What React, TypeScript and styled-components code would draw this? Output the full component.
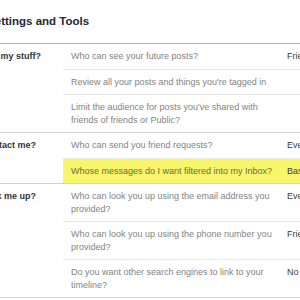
import React from 'react';
import styled, { createGlobalStyle } from 'styled-components';

const GlobalStyle = createGlobalStyle`
  html, body {
    margin: 0;
    padding: 0;
    background: #ffffff;
    overflow: hidden;
  }
  body {
    font-family: "Liberation Sans", Arial, sans-serif;
  }
`;

const Page = styled.div`
  width: 420px;
  margin-left: -57px;
`;

const Title = styled.h2`
  margin: 15px 0 0;
  padding-bottom: 15px;
  font-size: 11.5px;
  line-height: 13px;
  font-weight: bold;
  color: #232937;
  border-bottom: 1px solid #b4b4b4;
`;

const Section = styled.div`
  display: grid;
  grid-template-columns: 120px 1fr;
  border-bottom: 1px solid #d2d2d2;
`;

const Label = styled.div`
  padding-top: 6px;
  font-size: 9px;
  line-height: 12.5px;
  font-weight: bold;
  color: #333333;
`;

const Rows = styled.div`
  display: flex;
  flex-direction: column;
`;

const Row = styled.div<{ $highlight?: boolean }>`
  display: flex;
  align-items: flex-start;
  padding: 6px 0 6px 8px;
  font-size: 9px;
  line-height: 12.5px;
  background: ${(p) => (p.$highlight ? '#f8f66a' : 'transparent')};

  & + & {
    border-top: 1px solid #e8e8e8;
  }
`;

const Question = styled.div<{ $highlight?: boolean }>`
  width: 208px;
  margin-right: 8px;
  color: ${(p) => (p.$highlight ? '#6e6c3a' : '#838383')};
`;

const Value = styled.div`
  color: #3d3d3d;
  white-space: nowrap;
`;

interface Item {
  q: string;
  v?: string;
  highlight?: boolean;
}

interface Group {
  label: string;
  items: Item[];
}

const groups: Group[] = [
  {
    label: 'Who can see my stuff?',
    items: [
      { q: 'Who can see your future posts?', v: 'Friends' },
      { q: "Review all your posts and things you're tagged in" },
      { q: "Limit the audience for posts you've shared with friends of friends or Public?" },
    ],
  },
  {
    label: 'Who can contact me?',
    items: [
      { q: 'Who can send you friend requests?', v: 'Everyone' },
      { q: 'Whose messages do I want filtered into my Inbox?', v: 'Basic Filtering', highlight: true },
    ],
  },
  {
    label: 'Who can look me up?',
    items: [
      { q: 'Who can look you up using the email address you provided?', v: 'Everyone' },
      { q: 'Who can look you up using the phone number you provided?', v: 'Friends' },
      { q: 'Do you want other search engines to link to your timeline?', v: 'No' },
    ],
  },
];

const App: React.FC = () => {
  return (
    <Page>
      <GlobalStyle />
      <Title>Privacy Settings and Tools</Title>
      {groups.map((g) => (
        <Section key={g.label}>
          <Label>{g.label}</Label>
          <Rows>
            {g.items.map((it) => (
              <Row key={it.q} $highlight={it.highlight}>
                <Question $highlight={it.highlight}>{it.q}</Question>
                {it.v && <Value>{it.v}</Value>}
              </Row>
            ))}
          </Rows>
        </Section>
      ))}
    </Page>
  );
};

export default App;
